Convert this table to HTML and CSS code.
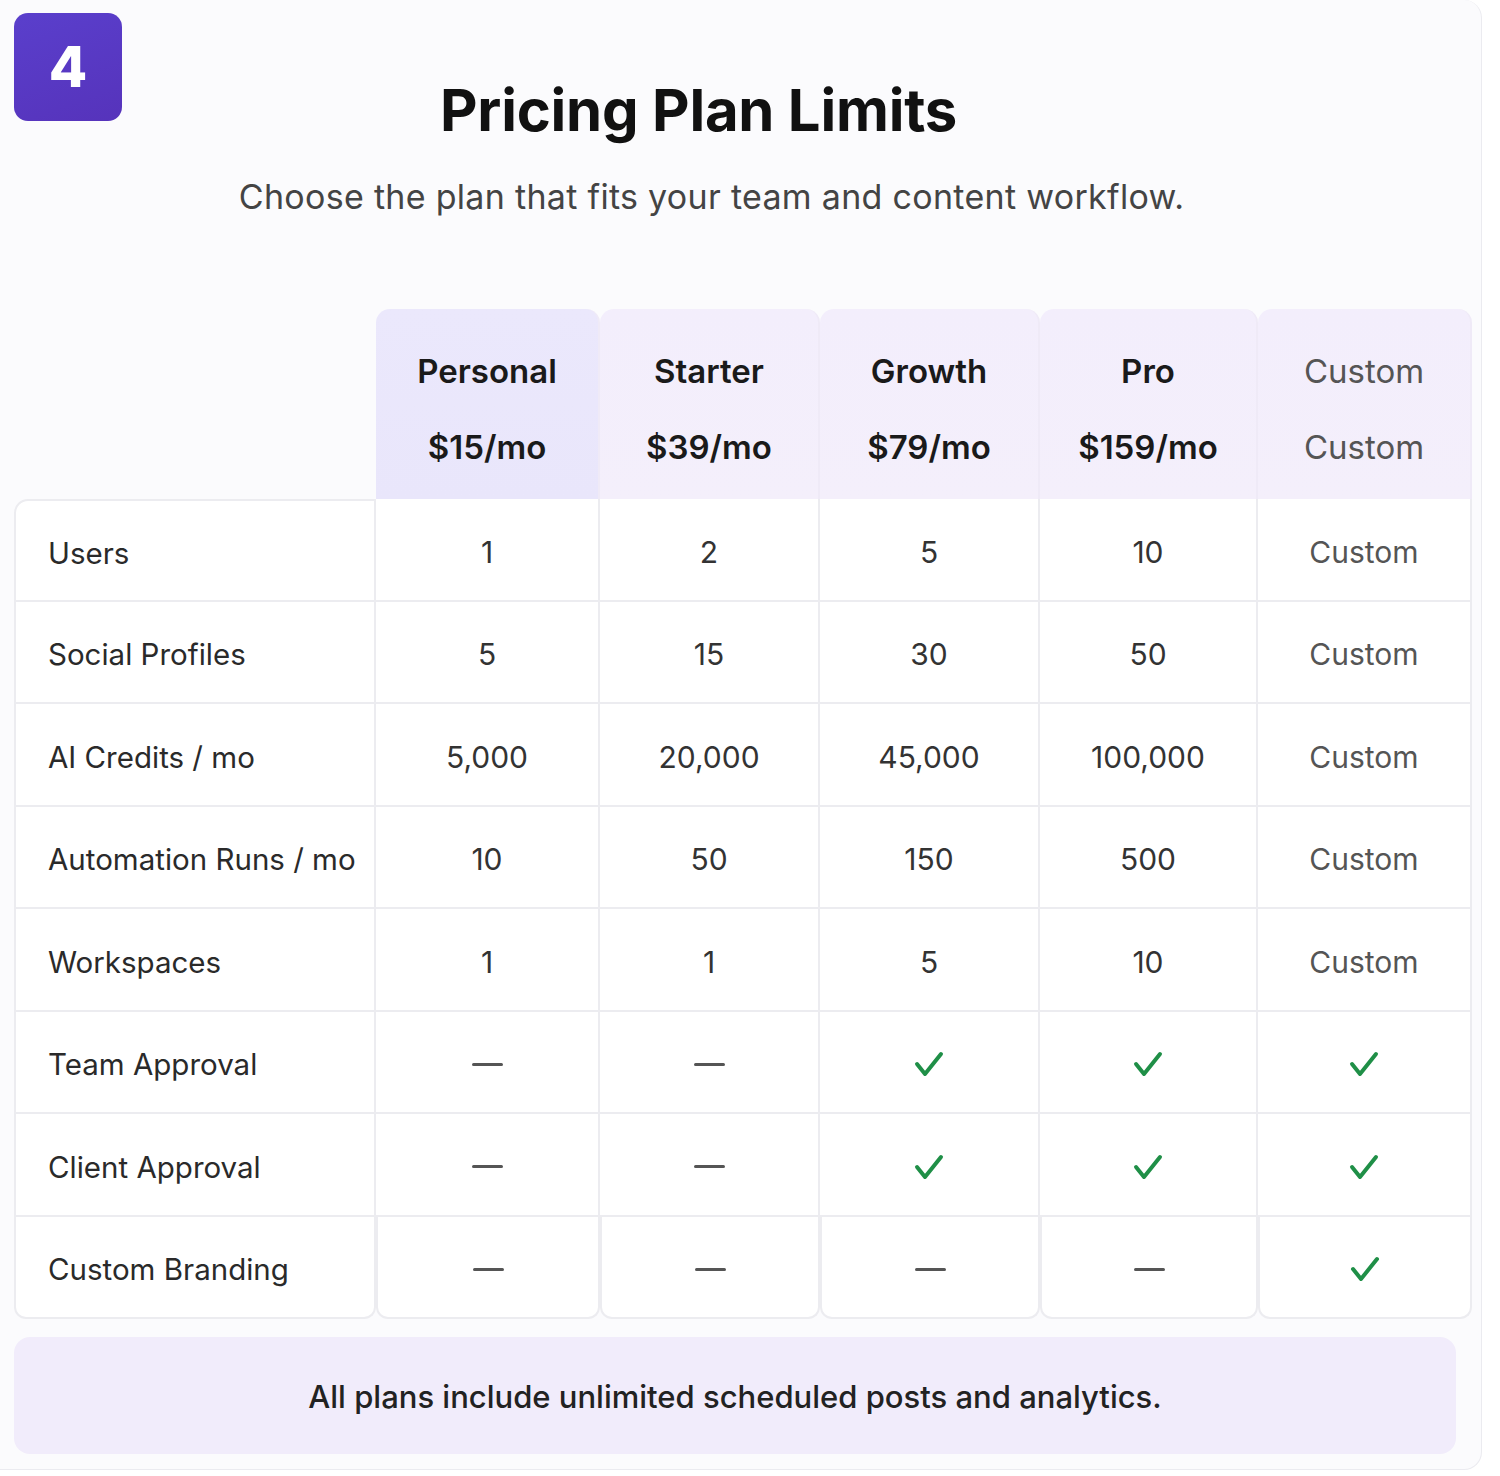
FILE: index.html
```html
<!DOCTYPE html>
<html lang="en">
<head>
<meta charset="utf-8">
<title>Pricing Plan Limits</title>
<link rel="stylesheet" href="styles.css">
</head>
<body>
<div class="card">
  <div class="badge">4</div>
  <header class="heading">
    <h1 class="title">Pricing Plan Limits</h1>
    <p class="subtitle">Choose the plan that fits your team and content workflow.</p>
  </header>

  <div class="table">
    <div class="corner"></div>
    <div class="plan plan-first"><span class="plan-name">Personal</span><span class="plan-price">$15/mo</span></div>
    <div class="plan"><span class="plan-name">Starter</span><span class="plan-price">$39/mo</span></div>
    <div class="plan"><span class="plan-name">Growth</span><span class="plan-price">$79/mo</span></div>
    <div class="plan"><span class="plan-name">Pro</span><span class="plan-price">$159/mo</span></div>
    <div class="plan plan-custom"><span class="plan-name">Custom</span><span class="plan-price">Custom</span></div>

    <div class="cell label first-row">Users</div>
    <div class="cell">1</div><div class="cell">2</div><div class="cell">5</div><div class="cell">10</div><div class="cell custom">Custom</div>

    <div class="cell label">Social Profiles</div>
    <div class="cell">5</div><div class="cell">15</div><div class="cell">30</div><div class="cell">50</div><div class="cell custom">Custom</div>

    <div class="cell label">AI Credits / mo</div>
    <div class="cell">5,000</div><div class="cell">20,000</div><div class="cell">45,000</div><div class="cell">100,000</div><div class="cell custom">Custom</div>

    <div class="cell label">Automation Runs / mo</div>
    <div class="cell">10</div><div class="cell">50</div><div class="cell">150</div><div class="cell">500</div><div class="cell custom">Custom</div>

    <div class="cell label">Workspaces</div>
    <div class="cell">1</div><div class="cell">1</div><div class="cell">5</div><div class="cell">10</div><div class="cell custom">Custom</div>

    <div class="cell label">Team Approval</div>
    <div class="cell"><span class="dash"></span></div>
    <div class="cell"><span class="dash"></span></div>
    <div class="cell"><svg class="check" viewBox="0 0 32 30"><polyline points="4,15 12,25 28,5"/></svg></div>
    <div class="cell"><svg class="check" viewBox="0 0 32 30"><polyline points="4,15 12,25 28,5"/></svg></div>
    <div class="cell"><svg class="check" viewBox="0 0 32 30"><polyline points="4,15 12,25 28,5"/></svg></div>

    <div class="cell label">Client Approval</div>
    <div class="cell"><span class="dash"></span></div>
    <div class="cell"><span class="dash"></span></div>
    <div class="cell"><svg class="check" viewBox="0 0 32 30"><polyline points="4,15 12,25 28,5"/></svg></div>
    <div class="cell"><svg class="check" viewBox="0 0 32 30"><polyline points="4,15 12,25 28,5"/></svg></div>
    <div class="cell"><svg class="check" viewBox="0 0 32 30"><polyline points="4,15 12,25 28,5"/></svg></div>

    <div class="cell label last-row">Custom Branding</div>
    <div class="cell last-row"><span class="dash"></span></div>
    <div class="cell last-row"><span class="dash"></span></div>
    <div class="cell last-row"><span class="dash"></span></div>
    <div class="cell last-row"><span class="dash"></span></div>
    <div class="cell last-row"><svg class="check" viewBox="0 0 32 30"><polyline points="4,15 12,25 28,5"/></svg></div>
  </div>

  <div class="note">All plans include unlimited scheduled posts and analytics.</div>
</div>
</body>
</html>
```

FILE: styles.css
```css
* { box-sizing: border-box; }

html, body {
  margin: 0;
  padding: 0;
  background: #ffffff;
}

body {
  font-family: Inter, "Noto Sans", "Liberation Sans", sans-serif;
  color: #222;
}

.card {
  position: relative;
  width: 1482px;
  height: 1470px;
  background: #fbfbfd;
  border: 1px solid #ebebf0;
  border-left: none;
  border-top: none;
  border-radius: 0 18px 18px 0;
  padding: 0 10px 0 14px;
}

.badge {
  position: absolute;
  left: 14px;
  top: 13px;
  width: 108px;
  height: 108px;
  border-radius: 14px;
  background: linear-gradient(160deg, #5a3fcc 0%, #5633bb 100%);
  color: #fff;
  font-weight: 800;
  font-size: 56px;
  display: flex;
  align-items: center;
  justify-content: center;
}

.heading {
  padding-top: 77px;
  padding-right: 62px;
  text-align: center;
}

.title {
  margin: 0;
  padding-right: 26px;
  font-size: 58px;
  line-height: 66px;
  font-weight: 700;
  color: #111;
  letter-spacing: -0.2px;
}

.subtitle {
  margin: 34px 0 0;
  font-size: 34px;
  line-height: 40px;
  color: #444;
  font-weight: 400;
  letter-spacing: 0.3px;
}

.table {
  margin-top: 92px;
  display: grid;
  grid-template-columns: 362px 224px 220px 220px 218px 214px;
  grid-template-rows: 190px repeat(8, 102.5px);
}

.corner { background: transparent; }

.plan {
  background: linear-gradient(180deg, #f3eefc 0%, #f4effb 100%);
  border-radius: 14px 14px 0 0;
  border-right: 2px solid #efeaf7;
  display: flex;
  flex-direction: column;
  align-items: center;
  justify-content: center;
  gap: 38px;
  padding-top: 10px;
  color: #1a1a1a;
}

.plan-first {
  background: linear-gradient(180deg, #ebe8fc 0%, #e9e6fb 100%);
}

.plan-name, .plan-price {
  font-size: 33px;
  line-height: 38px;
  font-weight: 600;
}

.plan-custom {
  color: #555;
}
.plan-custom .plan-name, .plan-custom .plan-price {
  font-weight: 400;
}

.cell {
  background: #fff;
  border-right: 2px solid #ececf0;
  border-bottom: 2px solid #ececf0;
  display: flex;
  align-items: center;
  justify-content: center;
  padding-top: 5px;
  font-size: 30px;
  color: #333;
}

.label {
  justify-content: flex-start;
  padding-left: 32px;
  border-left: 2px solid #ececf0;
  font-size: 29.5px;
  color: #2a2a2a;
}

.first-row { border-top: 2px solid #ececf0; border-top-left-radius: 14px; }

.last-row {
  border-bottom-left-radius: 12px;
  border-bottom-right-radius: 12px;
  border-left: 2px solid #ececf0;
}

.custom { color: #555; }

.dash {
  display: block;
  width: 31px;
  height: 3px;
  background: #555;
  border-radius: 2px;
}

.check {
  width: 32px;
  height: 30px;
  fill: none;
  stroke: #1f8f47;
  stroke-width: 4;
  stroke-linecap: round;
  stroke-linejoin: round;
}

.note {
  margin-top: 18px;
  width: 1442px;
  height: 117px;
  border-radius: 16px;
  background: #f1ecfb;
  display: flex;
  align-items: center;
  justify-content: center;
  padding-top: 2px;
  font-size: 31px;
  font-weight: 500;
  color: #222;
}
```
